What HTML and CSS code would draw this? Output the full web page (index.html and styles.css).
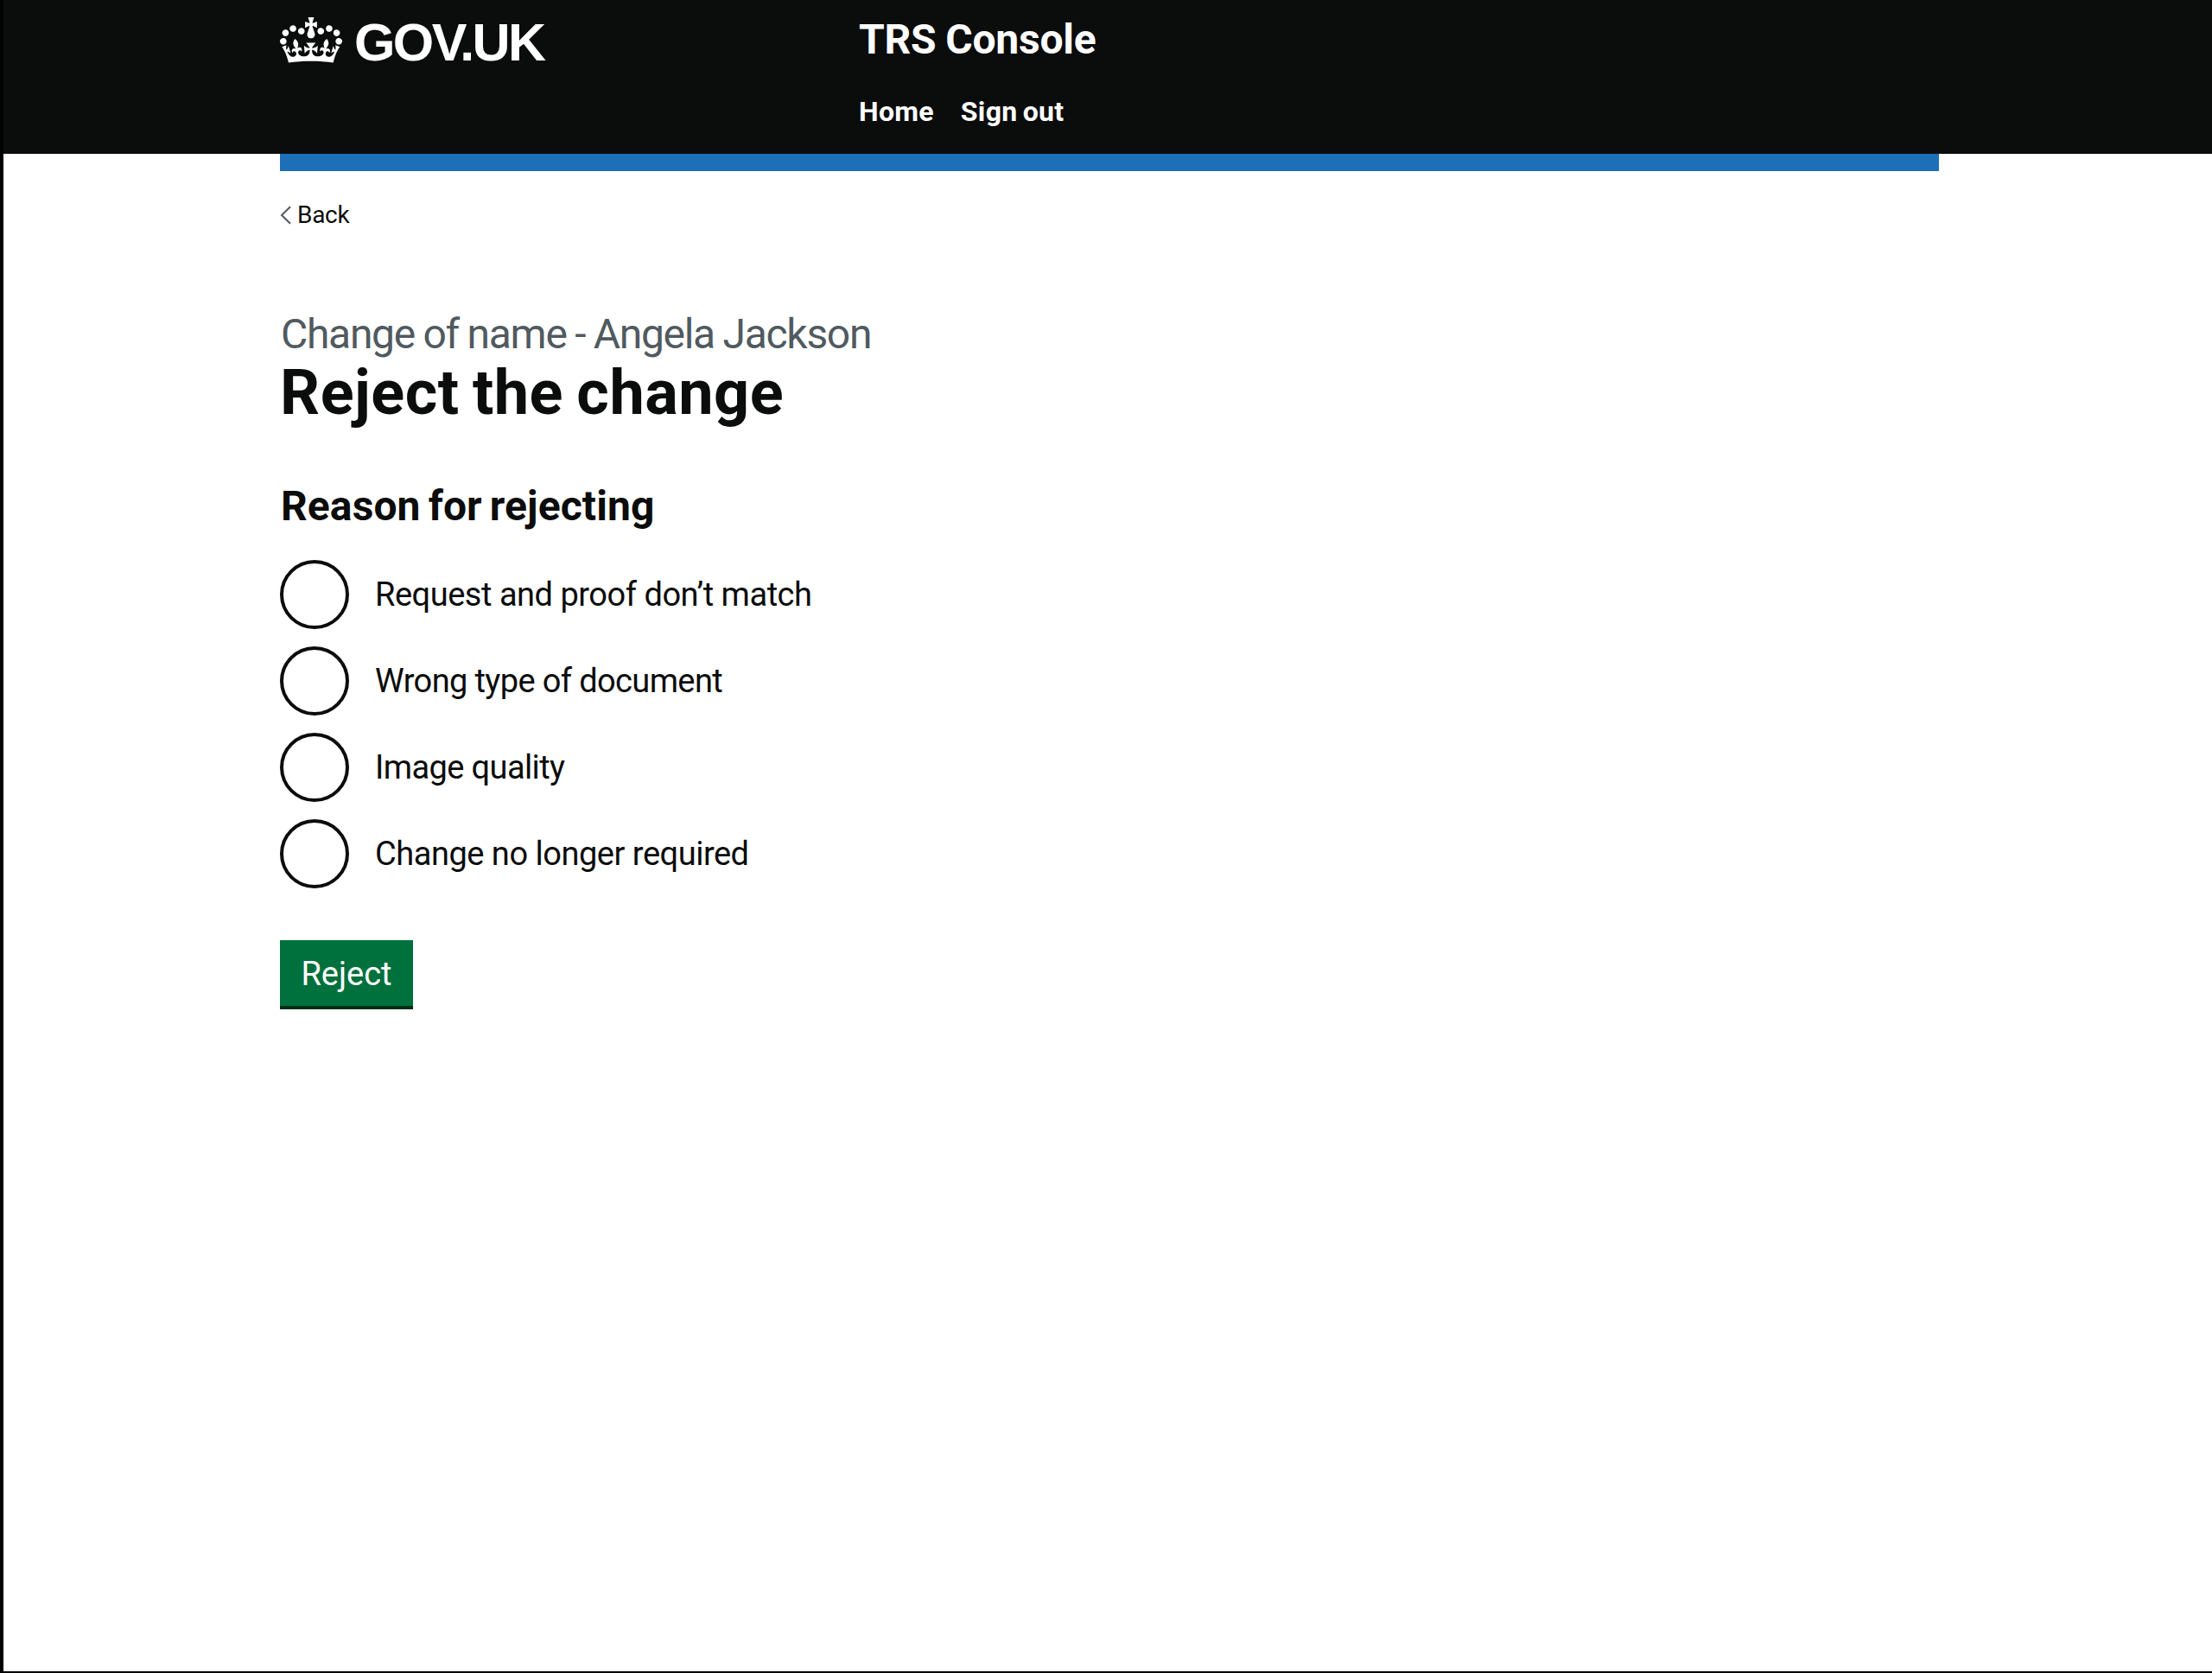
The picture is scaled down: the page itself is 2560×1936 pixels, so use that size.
FILE: index.html
```html
<!DOCTYPE html>
<html lang="en">
<head>
  <meta charset="utf-8">
  <title>Reject the change - TRS Console</title>
  <link rel="stylesheet" href="styles.css">
</head>
<body>
  <header class="header">
    <div class="container header-inner">
      <a class="logo" href="#">
        <svg class="crown" viewBox="0 0 132 97" aria-hidden="true">
          <path fill="currentColor" fill-rule="evenodd" d="M25 30.2c3.5 1.5 7.7-.2 9.1-3.7 1.5-3.6-.2-7.8-3.9-9.2-3.6-1.4-7.6.3-9.1 3.9-1.4 3.5.3 7.5 3.9 9zM9 39.5c3.6 1.5 7.8-.2 9.2-3.7 1.5-3.6-.2-7.8-3.9-9.1-3.6-1.5-7.6.2-9.1 3.8-1.4 3.5.3 7.5 3.8 9zM4.4 57.2c3.5 1.5 7.7-.2 9.1-3.8 1.5-3.6-.2-7.7-3.9-9.1-3.5-1.5-7.6.3-9.1 3.8-1.4 3.5.3 7.6 3.9 9.1zm38.3-21.4c3.5 1.5 7.7-.2 9.1-3.8 1.5-3.6-.2-7.7-3.9-9.1-3.6-1.5-7.6.3-9.1 3.8-1.3 3.6.4 7.7 3.9 9.1zm64.4-5.6c-3.6 1.5-7.8-.2-9.1-3.7-1.5-3.6.2-7.8 3.8-9.2 3.6-1.4 7.7.3 9.2 3.9 1.3 3.5-.4 7.5-3.9 9zm15.9 9.3c-3.6 1.5-7.7-.2-9.1-3.7-1.5-3.6.2-7.8 3.7-9.1 3.6-1.5 7.7.2 9.2 3.8 1.5 3.5-.3 7.5-3.8 9zm4.7 17.7c-3.6 1.5-7.8-.2-9.2-3.8-1.5-3.6.2-7.7 3.9-9.1 3.6-1.5 7.7.3 9.2 3.8 1.3 3.5-.4 7.6-3.9 9.1zM89.3 35.8c-3.6 1.5-7.8-.2-9.2-3.8-1.4-3.6.2-7.7 3.9-9.1 3.6-1.5 7.7.3 9.2 3.8 1.4 3.6-.3 7.7-3.9 9.1zM69.7 17.7l8.9 4.7V9.3l-8.9 2.8c-.2-.3-.5-.6-.9-.9L72.4 0H59.6l3.5 11.2c-.3.3-.6.5-.9.9l-8.8-2.8v13.1l8.8-4.7c.3.3.6.7.9.9l-5 15.4v.1c-.2.8-.4 1.6-.4 2.4 0 4.1 3.1 7.5 7 8.1h.2c.3 0 .7.1 1 .1.4 0 .7 0 1-.1h.2c4-.6 7.1-4.1 7.1-8.1 0-.8-.1-1.7-.4-2.4V34l-5.1-15.4c.4-.2.7-.6 1-.9zM66 92.8c16.9 0 32.8 1.1 47.1 3.2 4-16.9 8.9-26.7 14-33.5l-9.6-3.4c1 4.9 1.1 7.2 0 10.2-1.5-1.4-3-4.3-4.2-8.7L108.6 76c2.8-2 5-3.2 7.5-3.3-4.4 9.4-10 11.9-13.6 11.2-4.3-.8-6.3-4.6-5.6-7.9 1-4.7 5.7-5.9 8-.5 4.3-8.7-3-11.4-7.6-8.8 7.1-7.2 7.9-13.5 2.1-21.1-8 6.1-8.1 12.3-4.5 20.8-4.7-5.4-12.1-2.5-9.5 6.2 3.4-5.2 7.9-2 7.2 3.1-.6 4.3-6.4 7.8-13.5 7.2-10.3-.9-10.9-8-11.2-13.8 2.5-.5 7.1 1.8 11 7.3L80.2 60c-4.1 4.4-8 5.3-12.3 5.4 1.4-4.4 8-11.6 8-11.6H55.5s6.4 7.2 7.9 11.6c-4.2-.1-8-1-12.3-5.4l1.4 16.4c3.9-5.5 8.5-7.7 10.9-7.3-.3 5.8-.9 12.8-11.1 13.8-7.2.6-12.9-2.9-13.5-7.2-.7-5 3.8-8.3 7.1-3.1 2.7-8.7-4.6-11.6-9.4-6.2 3.7-8.5 3.6-14.7-4.6-20.8-5.8 7.6-5 13.9 2.2 21.1-4.7-2.6-11.9.1-7.7 8.8 2.3-5.5 7.1-4.2 8.1.5.7 3.3-1.3 7.1-5.7 7.9-3.5.7-9-1.8-13.5-11.2 2.5.1 4.7 1.3 7.5 3.3l-4.7-15.4c-1.2 4.4-2.7 7.2-4.3 8.7-1.1-3-.9-5.3 0-10.2l-9.5 3.4c5 6.9 9.9 16.7 14 33.5 14.8-2.1 30.8-3.2 47.7-3.2z"/>
        </svg>
        <span class="logo-text">GOV.UK</span>
      </a>
      <div class="header-content">
        <a class="service-name" href="#">TRS Console</a>
        <nav class="nav">
          <a class="nav-link" href="#">Home</a>
          <a class="nav-link" href="#">Sign out</a>
        </nav>
      </div>
    </div>
  </header>
  <div class="container">
    <div class="blue-bar"></div>
    <a class="back-link" href="#">
      <svg class="chevron" viewBox="0 0 14 22" aria-hidden="true"><path d="M12 1.2 2 11l10 9.8" fill="none" stroke="currentColor" stroke-width="2"/></svg>
      <span>Back</span>
    </a>
    <main class="main">
      <h1 class="heading"><span class="caption">Change of name - Angela Jackson</span>Reject the change</h1>
      <form>
        <fieldset class="fieldset">
          <legend class="legend">Reason for rejecting</legend>
          <div class="radios">
            <label class="radio"><input class="radio-input" type="radio" name="reason"><span class="radio-label">Request and proof don’t match</span></label>
            <label class="radio"><input class="radio-input" type="radio" name="reason"><span class="radio-label label-type">Wrong type of document</span></label>
            <label class="radio"><input class="radio-input" type="radio" name="reason"><span class="radio-label label-quality">Image quality</span></label>
            <label class="radio"><input class="radio-input" type="radio" name="reason"><span class="radio-label">Change no longer required</span></label>
          </div>
        </fieldset>
        <button class="button" type="button">Reject</button>
      </form>
    </main>
  </div>
</body>
</html>
```
FILE: styles.css
```css
* {
  box-sizing: border-box;
}

body {
  margin: 0;
  min-height: 1936px;
  border-left: 4px solid #000;
  border-bottom: 2px solid #000;
  background: #fff;
  color: #0b0c0c;
  font-family: Roboto, "Liberation Sans", sans-serif;
}

a {
  color: inherit;
  text-decoration: none;
}

.container {
  width: 1920px;
  margin-left: 320px;
}

.header {
  height: 178px;
  background: #0b0c0c;
  color: #fff;
}

.header-inner {
  display: grid;
  grid-template-columns: 670px 1fr;
  align-items: start;
}

.logo {
  display: flex;
  align-items: flex-start;
  gap: 14px;
  padding-top: 20px;
}

.crown {
  width: 72px;
  height: 53px;
}

.logo-text {
  font-family: "Liberation Sans", sans-serif;
  font-size: 61px;
  font-weight: 700;
  line-height: 58px;
  letter-spacing: -2.6px;
}

.header-content {
  display: flex;
  flex-direction: column;
  gap: 33px;
  padding-top: 16px;
}

.service-name {
  font-size: 48px;
  font-weight: 700;
  line-height: 60px;
  letter-spacing: -0.2px;
  word-spacing: -1px;
}

.nav {
  display: flex;
  gap: 31px;
  font-size: 32px;
  font-weight: 700;
  line-height: 40px;
  letter-spacing: 0.3px;
  word-spacing: -2px;
}

.blue-bar {
  height: 20px;
  background: #1d70b8;
}

.back-link {
  display: inline-flex;
  align-items: center;
  gap: 6px;
  margin-top: 34px;
  font-size: 28px;
  line-height: 34px;
  letter-spacing: -0.3px;
}

.chevron {
  width: 14px;
  height: 22px;
  color: #505a5f;
}

.main {
  padding-top: 91px;
}

.heading {
  margin: 0 0 63px;
  font-size: 72px;
  font-weight: 700;
  line-height: 76px;
  letter-spacing: 0.5px;
  word-spacing: -3px;
}

.caption {
  display: block;
  padding-left: 1px;
  color: #505a5f;
  font-size: 48px;
  font-weight: 400;
  line-height: 60px;
  letter-spacing: -1.3px;
  word-spacing: -1px;
}

.fieldset {
  margin: 0;
  padding: 0;
  border: 0;
}

.legend {
  margin-bottom: 32px;
  padding: 0 0 0 1px;
  font-size: 48px;
  font-weight: 700;
  line-height: 60px;
  letter-spacing: 0.1px;
  word-spacing: -3px;
}

.radios {
  display: flex;
  flex-direction: column;
  gap: 20px;
}

.radio {
  display: flex;
  gap: 30px;
  height: 80px;
}

.radio-input {
  width: 80px;
  height: 80px;
  margin: 0;
  border: 4px solid #0b0c0c;
  border-radius: 50%;
  appearance: none;
}

.radio-label {
  font-size: 38px;
  line-height: 80px;
  letter-spacing: -0.48px;
}

.label-type {
  letter-spacing: -0.62px;
}

.label-quality {
  letter-spacing: -0.61px;
}

.button {
  display: block;
  width: 154px;
  height: 80px;
  margin-top: 60px;
  padding: 2px 0 0;
  border: 0;
  border-bottom: 4px solid #002d18;
  background: #00703c;
  color: #fff;
  font-family: inherit;
  font-size: 38px;
  text-align: center;
}
```
